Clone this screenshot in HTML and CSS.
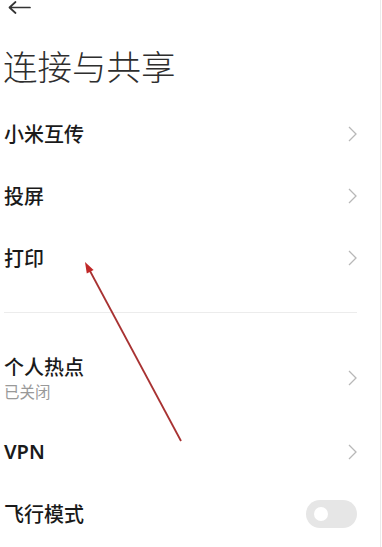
FILE: index.html
```html
<!DOCTYPE html>
<html lang="zh-CN">
<head>
<meta charset="utf-8">
<link rel="stylesheet" href="styles.css">
</head>
<body>
<div class="page">
  <div class="topbar">
    <svg class="back" width="23" height="13" viewBox="0 0 23 13"><path d="M22 6.5H1.5M7.5 1L1.5 6.5L7.5 12" fill="none" stroke="#333" stroke-width="1.7" stroke-linecap="round" stroke-linejoin="round"/></svg>
  </div>
  <h1 class="title">连接与共享</h1>
  <div class="list">
    <div class="row"><span class="label">小米互传</span><svg class="chev" width="9" height="16" viewBox="0 0 9 16"><path d="M1 1L8 8L1 15" fill="none" stroke="#b8b8b8" stroke-width="1.3"/></svg></div>
    <div class="row"><span class="label">投屏</span><svg class="chev" width="9" height="16" viewBox="0 0 9 16"><path d="M1 1L8 8L1 15" fill="none" stroke="#b8b8b8" stroke-width="1.3"/></svg></div>
    <div class="row"><span class="label">打印</span><svg class="chev" width="9" height="16" viewBox="0 0 9 16"><path d="M1 1L8 8L1 15" fill="none" stroke="#b8b8b8" stroke-width="1.3"/></svg></div>
  </div>
  <div class="divider"></div>
  <div class="list">
    <div class="row row-tall">
      <div class="stack"><span class="label">个人热点</span><span class="sub">已关闭</span></div>
      <svg class="chev" width="9" height="16" viewBox="0 0 9 16"><path d="M1 1L8 8L1 15" fill="none" stroke="#b8b8b8" stroke-width="1.3"/></svg>
    </div>
    <div class="row"><span class="label latin">VPN</span><svg class="chev" width="9" height="16" viewBox="0 0 9 16"><path d="M1 1L8 8L1 15" fill="none" stroke="#b8b8b8" stroke-width="1.3"/></svg></div>
    <div class="row"><span class="label">飞行模式</span><span class="toggle"><span class="knob"></span></span></div>
  </div>
  <svg class="annot" width="382" height="547" viewBox="0 0 382 547">
    <line x1="181" y1="441" x2="90" y2="271" stroke="#a83232" stroke-width="1.8"/>
    <polygon points="85,262 93.6,270 86.8,273.6" fill="#c02828"/>
  </svg>
</div>
</body>
</html>
```
FILE: styles.css
```css
html, body {
  margin: 0;
  padding: 0;
  background: #fff;
}
.page {
  position: relative;
  width: 381px;
  height: 547px;
  box-sizing: border-box;
  border-right: 1px solid #ebebeb;
  padding: 0 23px 0 4px;
  font-family: "Noto Sans CJK SC", "Noto Sans", sans-serif;
  color: #1a1a1a;
  overflow: hidden;
}
.topbar {
  height: 45px;
  padding-top: 1px;
  box-sizing: border-box;
}
.back {
  display: block;
  margin-left: 4px;
}
.title {
  margin: 0;
  font-size: 34.5px;
  line-height: 40px;
  font-weight: 300;
  color: #2e2e2e;
  margin-left: -1px;
  height: 58px;
}
.list {
  display: flex;
  flex-direction: column;
}
.row {
  display: flex;
  align-items: center;
  justify-content: space-between;
  height: 62px;
}
.row-tall {
  height: 86px;
}
.label {
  font-size: 20px;
  line-height: 24px;
  font-weight: 500;
  color: #1a1a1a;
}
.latin {
  font-family: "Noto Sans", "Noto Sans CJK SC", sans-serif;
  font-weight: 600;
}
.stack {
  display: flex;
  flex-direction: column;
  gap: 2px;
}
.sub {
  font-size: 15.5px;
  line-height: 21px;
  color: #999;
}
.chev {
  display: block;
  margin-right: 0;
}
.divider {
  height: 1px;
  background: #ececec;
  margin: 23px 0 22px;
}
.toggle {
  display: flex;
  align-items: center;
  width: 51px;
  height: 28px;
  border-radius: 14px;
  background: #e6e6e6;
  padding-left: 8px;
  box-sizing: border-box;
}
.knob {
  width: 14px;
  height: 14px;
  border-radius: 50%;
  background: #fff;
}
.annot {
  position: absolute;
  left: 0;
  top: 0;
  pointer-events: none;
}
```
